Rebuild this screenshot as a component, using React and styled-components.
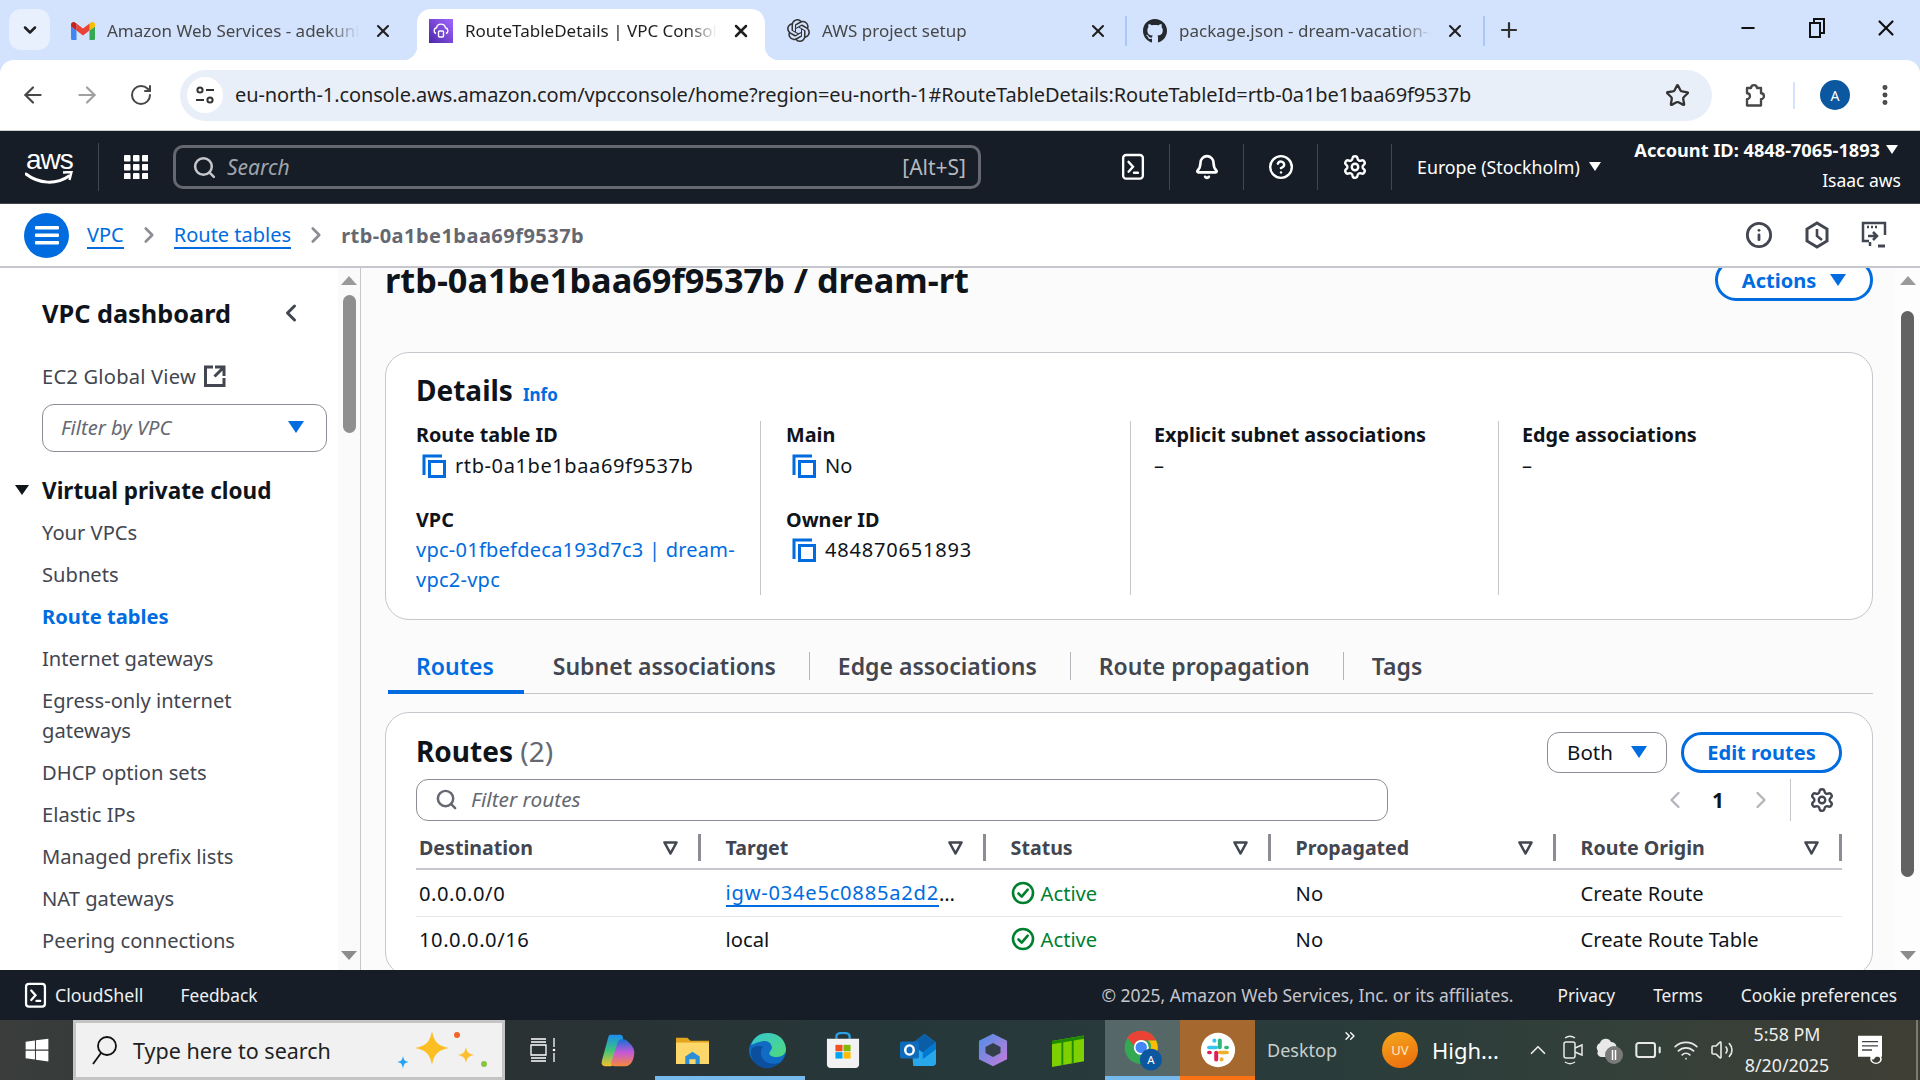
import React from "react";
import styled, { createGlobalStyle } from "styled-components";
import {
  ArrowLeft, ArrowRight, RotateCw, Star, EllipsisVertical, X, Plus, Minus, ChevronDown,
  Bell, CircleHelp, Settings, Search, ChevronLeft, ChevronRight, ChevronUp, Info,
  Battery, Wifi, Volume2, ChevronsRight,
} from "lucide-react";
import { SiOpenai } from "react-icons/si";
import { FaGithub, FaWindows } from "react-icons/fa";

const GlobalStyle = createGlobalStyle`
  html, body { margin: 0; padding: 0; background: #fff; }
  body { font-family: "Noto Sans", "Open Sans", sans-serif; color: #0f141a; }
  * { box-sizing: border-box; }
`;

const Page = styled.div`
  width: 1920px;
  height: 1080px;
  display: flex;
  flex-direction: column;
  overflow: hidden;
`;

/* ---- browser chrome ---- */
const TabStrip = styled.div`
  height: 60px;
  background: #d3e3fd;
  display: flex;
  align-items: flex-end;
  padding-left: 9px;
  flex: none;
`;
const TabList = styled.button`
  width: 41px;
  height: 41px;
  align-self: flex-start;
  margin: 9px 9px 0 0;
  border: 0;
  border-radius: 12px;
  background: #e8f0fe;
  display: flex;
  align-items: center;
  justify-content: center;
  padding: 0;
  color: #1f1f1f;
`;
const Tab = styled.div`
  position: relative;
  width: 348px;
  height: 51px;
  margin-right: ${p => p.$gap || 9}px;
  padding: 0 0 8px 12px;
  display: flex;
  align-items: center;
  border-radius: 14px 14px 0 0;
  background: ${p => (p.$active ? "#fff" : "transparent")};
  ${p => p.$active && `
    &::before, &::after {
      content: "";
      position: absolute;
      bottom: 0;
      width: 14px;
      height: 14px;
    }
    &::before { left: -14px; background: radial-gradient(circle at 0 0, #d3e3fd 14px, #fff 14.5px); }
    &::after { right: -14px; background: radial-gradient(circle at 100% 0, #d3e3fd 14px, #fff 14.5px); }
  `}
`;
const Favicon = styled.span`
  width: 24px;
  height: 24px;
  margin-right: 12px;
  display: flex;
  align-items: center;
  justify-content: center;
  flex: none;
`;
const TabTitle = styled.span`
  width: 252px;
  white-space: nowrap;
  overflow: hidden;
  font-size: 17px;
  color: ${p => (p.$active ? "#1f1f1f" : "#474747")};
  -webkit-mask-image: linear-gradient(to right, #000 88%, transparent 100%);
  mask-image: linear-gradient(to right, #000 88%, transparent 100%);
`;
const TabClose = styled.span`
  margin-left: 12px;
  width: 24px;
  display: flex;
  justify-content: center;
  color: #1f1f1f;
`;
const TabSep = styled.span`
  width: 2px;
  height: 30px;
  background: #a8c7fa;
  align-self: flex-start;
  margin: 16px ${p => p.$right}px 0 ${p => p.$left}px;
`;
const NewTab = styled.span`
  align-self: flex-start;
  margin: 18px 0 0 12px;
  color: #303030;
  display: flex;
`;
const WindowButtons = styled.div`
  margin-left: auto;
  align-self: flex-start;
  display: flex;
  margin-top: 12px;
  color: #111;
`;
const WindowButton = styled.span`
  width: 69px;
  height: 32px;
  display: flex;
  align-items: center;
  justify-content: center;
`;
const Toolbar = styled.div`
  height: 70px;
  background: #fff;
  display: flex;
  align-items: center;
  border-radius: 14px 14px 0 0;
  padding-left: 6px;
  flex: none;
  color: #474747;
  position: relative;
`;
const TabStripBack = styled.div`
  background: #d3e3fd;
  flex: none;
`;
const ToolButton = styled.span`
  width: ${p => p.$width || 54}px;
  margin-left: ${p => p.$left || 0}px;
  display: flex;
  justify-content: center;
  flex: none;
  color: ${p => (p.$dim ? "#a0a0a0" : "#474747")};
`;
const AddressBar = styled.div`
  margin-left: 12px;
  width: 1532px;
  height: 51px;
  border-radius: 26px;
  background: #e9eff9;
  display: flex;
  align-items: center;
  padding-left: 7px;
  flex: none;
`;
const SiteChip = styled.span`
  width: 36px;
  height: 36px;
  border-radius: 50%;
  background: #fff;
  display: flex;
  align-items: center;
  justify-content: center;
  flex: none;
`;
const UrlText = styled.span`
  margin-left: 12px;
  padding-bottom: 2px;
  font-size: 20px;
  letter-spacing: -0.11px;
  color: #1f1f1f;
  white-space: nowrap;
  flex: 1;
  overflow: hidden;
`;
const StarWrap = styled.span`
  width: 60px;
  margin-right: 5px;
  display: flex;
  justify-content: center;
  color: #333;
`;
const ToolDivider = styled.span`
  width: 2px;
  height: 27px;
  background: #d3e3fd;
  margin: 0 25px 0 12px;
  flex: none;
`;
const Avatar = styled.span`
  width: 30px;
  height: 30px;
  border-radius: 50%;
  background: #0b57a0;
  color: #fff;
  font-size: 14px;
  display: flex;
  align-items: center;
  justify-content: center;
  flex: none;
`;
const ChromeEdge = styled.div`
  height: 1px;
  background: #cfcfcf;
  flex: none;
`;

/* ---- aws top nav ---- */
const Nav = styled.div`
  height: 73px;
  background: #161d26;
  display: flex;
  align-items: center;
  color: #fff;
  flex: none;
  border-bottom: 1px solid #414750;
`;
const LogoCell = styled.div`
  width: 99px;
  height: 48px;
  border-right: 1px solid #414750;
  padding-left: 25px;
  display: flex;
  flex-direction: column;
  justify-content: center;
`;
const LogoWord = styled.span`
  font-family: "Liberation Sans", sans-serif;
  font-size: 28px;
  line-height: 22px;
  font-weight: 400;
  letter-spacing: -1px;
  margin-left: 1px;
`;
const GridCell = styled.div`
  width: 74px;
  display: flex;
  justify-content: center;
`;
const SearchBox = styled.div`
  width: 808px;
  height: 44px;
  border: 3px solid #656871;
  border-radius: 10px;
  display: flex;
  align-items: center;
  padding: 0 12px 0 16px;
  color: #c6c6cd;
  font-size: 21px;
`;
const SearchHint = styled.span`
  font-style: italic;
  margin-left: 10px;
  color: #a0a5ad;
`;
const SearchKey = styled.span`
  margin-left: auto;
  color: #b4b8bf;
`;
const NavIcons = styled.div`
  margin-left: 115px;
  display: flex;
`;
const NavIcon = styled.div`
  width: 74px;
  height: 46px;
  border-right: 1px solid #414750;
  display: flex;
  align-items: center;
  justify-content: center;
`;
const RegionText = styled.div`
  margin-left: 25px;
  padding-bottom: 1px;
  font-size: 17.8px;
  display: flex;
  align-items: center;
  gap: 9px;
  white-space: nowrap;
  color: #fff;
`;
const Caret = styled.span`
  width: 0;
  height: 0;
  display: inline-block;
  flex: none;
  border-left: ${p => p.$size || 6}px solid transparent;
  border-right: ${p => p.$size || 6}px solid transparent;
  border-top: ${p => (p.$size || 6) * 1.5}px solid ${p => p.$color || "currentColor"};
`;
const AccountBlock = styled.div`
  margin-left: auto;
  padding: 0 19px 5px 0;
  text-align: right;
  font-size: 17.5px;
  line-height: 24px;
`;
const AccountLine = styled.div`
  font-size: 18.2px;
  font-weight: 700;
  display: flex;
  align-items: center;
  justify-content: flex-end;
  gap: 6px;
  margin: 0 3px 6px 0;
`;

/* ---- breadcrumb ---- */
const CrumbBar = styled.div`
  height: 64px;
  background: #fff;
  border-bottom: 2px solid #c6c6cd;
  display: flex;
  align-items: center;
  padding-left: 24px;
  font-size: 20px;
  flex: none;
`;
const MenuButton = styled.span`
  width: 45px;
  height: 45px;
  border-radius: 50%;
  background: #006ce0;
  display: flex;
  align-items: center;
  justify-content: center;
  margin-right: 18px;
  color: #fff;
`;
const Crumb = styled.a`
  color: #006ce0;
  border-bottom: 2px solid #006ce0;
  line-height: 25px;
`;
const CrumbChevron = styled.span`
  width: 50px;
  display: flex;
  justify-content: center;
  color: #8c8c94;
`;
const CrumbCurrent = styled.span`
  color: #656871;
  font-weight: 700;
  letter-spacing: 0.47px;
`;
const CrumbTools = styled.div`
  margin-left: auto;
  display: flex;
  align-items: center;
  gap: 32px;
  padding-right: 33px;
  color: #424650;
`;

/* ---- body ---- */
const Body = styled.div`
  flex: 1;
  display: flex;
  min-height: 0;
`;
const Sidebar = styled.div`
  width: 361px;
  background: #fff;
  border-right: 1px solid #c6c6cd;
  display: flex;
  flex: none;
`;
const SideContent = styled.div`
  flex: 1;
  padding-left: 42px;
  overflow: hidden;
  font-size: 20.15px;
  color: #424650;
`;
const SideTitleRow = styled.div`
  margin-top: 25px;
  height: 40px;
  display: flex;
  align-items: center;
  font-size: 25.3px;
  font-weight: 700;
  color: #0f141a;
`;
const SideBack = styled.span`
  margin-left: 46px;
  display: flex;
  color: #424650;
`;
const SideLink = styled.div`
  margin-top: 28px;
  line-height: 30px;
  display: flex;
  align-items: center;
  gap: 8px;
  letter-spacing: 0.2px;
`;
const SideSelect = styled.div`
  margin-top: 13px;
  width: 285px;
  height: 48px;
  border: 1px solid #8c8c94;
  border-radius: 12px;
  display: flex;
  align-items: center;
  justify-content: space-between;
  padding: 0 22px 2px 18px;
  font-style: italic;
  color: #656871;
`;
const SideSection = styled.div`
  margin: 18px 0 7px -27px;
  display: flex;
  align-items: center;
  gap: 13px;
  height: 40px;
  font-size: 22.5px;
  font-weight: 700;
  color: #0f141a;
`;
const SideItem = styled.div`
  line-height: 30px;
  margin-bottom: 12px;
  width: 250px;
  ${p => p.$active && "color: #006ce0; font-weight: 700;"}
`;
const Rail = styled.div`
  width: ${p => p.$width}px;
  flex: none;
  background: ${p => p.$bg};
  display: flex;
  flex-direction: column;
  align-items: center;
  padding: 8px 0 10px;
`;
const RailArrowUp = styled.span`
  width: 0;
  height: 0;
  border-left: 8px solid transparent;
  border-right: 8px solid transparent;
  border-bottom: 9px solid #9a9a9a;
`;
const RailArrowDown = styled.span`
  width: 0;
  height: 0;
  border-left: 8px solid transparent;
  border-right: 8px solid transparent;
  border-top: 9px solid #8c8c8c;
  margin-top: auto;
`;
const RailThumb = styled.span`
  width: 13px;
  height: ${p => p.$height}px;
  margin-top: ${p => p.$top}px;
  border-radius: 7px;
  background: ${p => p.$color};
`;

const Main = styled.div`
  flex: 1;
  background: #fbfbfb;
  display: flex;
  min-width: 0;
`;
const MainContent = styled.div`
  flex: 1;
  min-width: 0;
  overflow: hidden;
  padding: 0 22px 0 24px;
`;
const TitleRow = styled.div`
  margin-top: -9px;
  height: 42px;
  display: flex;
  align-items: center;
  justify-content: space-between;
`;
const PageTitle = styled.h1`
  margin: 0;
  font-size: 34.3px;
  line-height: 42px;
  font-weight: 700;
  color: #0f141a;
`;
const OutlineButton = styled.button`
  font-family: inherit;
  height: ${p => p.$height || 42}px;
  width: ${p => p.$width}px;
  border: 3px solid #006ce0;
  border-radius: 21px;
  background: #fff;
  color: #006ce0;
  font-size: 20px;
  font-weight: 700;
  display: flex;
  align-items: center;
  justify-content: center;
  gap: 14px;
  padding: 0;
`;
const Card = styled.section`
  background: #fff;
  border: 1px solid #c6c6cd;
  border-radius: 24px;
  padding: ${p => p.$pad};
  height: ${p => p.$height}px;
  margin-top: ${p => p.$top || 0}px;
`;
const CardHeading = styled.div`
  display: flex;
  align-items: baseline;
  height: 40px;
  line-height: 40px;
  gap: 10px;
`;
const CardTitle = styled.h2`
  margin: 0;
  font-size: 28px;
  font-weight: 700;
  color: #0f141a;
`;
const InfoLink = styled.a`
  font-size: 17px;
  font-weight: 700;
  color: #006ce0;
`;
const DetailGrid = styled.div`
  margin-top: 11px;
  display: grid;
  grid-template-columns: 345px 370px 368px 1fr;
  height: 174px;
`;
const DetailCol = styled.div`
  padding-left: ${p => p.$pad}px;
  padding-right: 20px;
  border-right: ${p => (p.$last ? "0" : "1px solid #c6c6cd")};
  font-size: 20px;
`;
const DetailLabel = styled.div`
  font-weight: 700;
  font-size: 19.8px;
  line-height: 28px;
  margin-top: ${p => p.$top || 0}px;
  white-space: nowrap;
`;
const DetailValue = styled.div`
  line-height: 30px;
  margin-top: ${p => (p.$tight ? 1 : 2)}px;
  display: flex;
  align-items: center;
  gap: 9px;
  padding-left: ${p => (p.$copy ? 6 : 0)}px;
`;
const Spaced = styled.span`
  letter-spacing: ${p => p.$sp}px;
`;
const DetailLink = styled.a`
  display: block;
  line-height: 30px;
  margin-top: 1px;
  color: #006ce0;
  letter-spacing: 0.25px;
`;
const TabsBar = styled.div`
  margin: 30px 0 18px 3px;
  height: 44px;
  display: flex;
  border-bottom: 1px solid #c6c6cd;
`;
const PageTab = styled.div`
  height: 44px;
  padding: 0 ${p => (p.$active ? 30 : 33)}px ${p => (p.$active ? 8 : 12)}px ${p => (p.$active ? 28 : 29)}px;
  display: flex;
  align-items: center;
  position: relative;
  font-size: 23px;
  font-weight: 600;
  color: ${p => (p.$active ? "#006ce0" : "#424650")};
  border-bottom: ${p => (p.$active ? "4px solid #006ce0" : "0")};
  & + &::before {
    content: "";
    position: absolute;
    left: 0;
    top: 2px;
    width: 1px;
    height: 28px;
    background: #b4b4bb;
  }
`;
const RoutesHead = styled.div`
  display: flex;
  align-items: center;
  height: 42px;
  gap: 14px;
`;
const RoutesTitle = styled.h2`
  margin: -2px auto 0 0;
  font-size: 28px;
  font-weight: 700;
  color: #0f141a;
`;
const RoutesCount = styled.span`
  font-weight: 400;
  color: #656871;
`;
const SelectButton = styled.div`
  width: 120px;
  height: 41px;
  border: 1px solid #8c8c94;
  border-radius: 12px;
  background: #fff;
  display: flex;
  align-items: center;
  justify-content: center;
  gap: 18px;
  font-size: 20.5px;
  padding-bottom: 1px;
`;
const FilterRow = styled.div`
  margin-top: 6px;
  height: 42px;
  display: flex;
  align-items: center;
`;
const FilterBox = styled.div`
  width: 972px;
  height: 42px;
  border: 1px solid #8c8c94;
  border-radius: 12px;
  display: flex;
  align-items: center;
  padding: 0 0 2px 18px;
  gap: 13px;
  font-size: 20.8px;
  font-style: italic;
  color: #656871;
`;
const Pager = styled.div`
  margin-left: auto;
  display: flex;
  align-items: center;
  height: 42px;
  font-size: 21px;
  color: #0f141a;
`;
const PagerArrow = styled.span`
  display: flex;
  color: #b4b4bb;
`;
const PagerNum = styled.span`
  width: 58px;
  text-align: center;
  font-weight: 700;
`;
const PagerGear = styled.span`
  margin-left: 15px;
  width: 52px;
  height: 42px;
  border-left: 1px solid #c6c6cd;
  display: flex;
  align-items: center;
  justify-content: center;
  color: #424650;
  padding-left: 10px;
`;
const TableGrid = styled.div`
  display: grid;
  grid-template-columns: 285px 285px 285px 285px 286px;
  margin-top: 6px;
  font-size: 20.15px;
`;
const HeadCell = styled.div`
  height: 43px;
  border-bottom: 2px solid #c6c6cd;
  padding-left: ${p => (p.$first ? 3 : 24.6)}px;
  display: flex;
  align-items: center;
  font-size: 19.6px;
  font-weight: 700;
  color: #424650;
`;
const SortIcon = styled.svg`
  margin-left: auto;
  margin-right: 20px;
  flex: none;
`;
const HeadSep = styled.span`
  width: 3px;
  height: 27px;
  background: #8c8c94;
  flex: none;
`;
const Cell = styled.div`
  height: ${p => p.$height}px;
  border-bottom: ${p => (p.$last ? "0" : "1px solid #e8e8ec")};
  padding-left: ${p => (p.$first ? 3 : 24.6)}px;
  display: flex;
  align-items: center;
  color: #0f141a;
  white-space: nowrap;
`;
const TargetLink = styled.a`
  color: #006ce0;
  border-bottom: 2px solid #006ce0;
  line-height: 25px;
  letter-spacing: 0.75px;
`;
const ActiveStatus = styled.span`
  display: flex;
  align-items: center;
  gap: 6px;
  color: #00802f;
`;

/* ---- console footer ---- */
const ConsoleFooter = styled.div`
  height: 50px;
  background: #161d26;
  color: #d8dce0;
  font-size: 17.3px;
  display: flex;
  align-items: center;
  padding: 0 23px 0 24px;
  flex: none;
`;
const FooterShell = styled.span`
  display: flex;
  align-items: center;
  gap: 8px;
  font-size: 17.8px;
  color: #eef0f2;
  margin-right: 37px;
`;
const FooterCopy = styled.span`
  margin-left: auto;
  font-size: 17.5px;
  color: #c6c6cd;
  margin-right: 44px;
`;
const FooterLink = styled.span`
  margin-left: ${p => p.$gap || 0}px;
  color: #eef0f2;
`;

/* ---- windows taskbar ---- */
const Taskbar = styled.div`
  height: 60px;
  background: linear-gradient(90deg, #3a3d3c 0%, #2a3133 25%, #26383a 50%, #2a3c3a 70%, #34403a 85%, #3f3e34 100%);
  display: flex;
  align-items: center;
  color: #fff;
  flex: none;
`;
const StartCell = styled.div`
  width: 73px;
  display: flex;
  justify-content: center;
`;
const TaskSearch = styled.div`
  width: 432px;
  height: 60px;
  background: #f1f1f1;
  border: 3px solid #c4c4c4;
  display: flex;
  align-items: center;
  padding-left: 15px;
  color: #222;
  font-size: 21.5px;
  flex: none;
`;
const TaskSearchText = styled.span`
  margin-left: 14px;
`;
const TaskSparkle = styled.span`
  margin-left: auto;
  margin-right: 11px;
  display: flex;
`;
const TaskSlot = styled.div`
  width: 75px;
  height: 60px;
  display: flex;
  align-items: center;
  justify-content: center;
  flex: none;
  background: ${p => p.$bg || "transparent"};
  border-bottom: 4px solid ${p => p.$line || "transparent"};
  padding-top: 4px;
`;
const DesktopLabel = styled.span`
  margin-left: 12px;
  font-size: 18px;
  color: #c9cfcf;
  width: 75px;
`;
const MoreChevrons = styled.span`
  align-self: flex-start;
  margin-top: 8px;
  display: flex;
  color: #fff;
`;
const WeatherBadge = styled.span`
  margin-left: 24px;
  width: 36px;
  height: 36px;
  flex: none;
  border-radius: 50%;
  background: linear-gradient(160deg, #f4a81d, #ec6a0c);
  color: #ffe9c2;
  font-size: 13px;
  display: flex;
  align-items: center;
  justify-content: center;
`;
const WeatherText = styled.span`
  margin-left: 14px;
  font-size: 22px;
  width: 93px;
  white-space: nowrap;
`;
const Tray = styled.div`
  display: flex;
  align-items: center;
  gap: 11px;
  color: #e8e8e8;
`;
const ClockBlock = styled.div`
  width: 112px;
  margin-left: -3px;
  text-align: center;
  font-size: 17.8px;
  line-height: 31px;
  color: #eee;
  white-space: nowrap;
`;
const NotifyCell = styled.div`
  width: 50px;
  display: flex;
  justify-content: center;
  margin-left: 2px;
`;
const ShowDesktop = styled.span`
  width: 2px;
  height: 60px;
  margin-left: auto;
  margin-right: 2px;
  background: #7a7a70;
`;

/* ---- small drawings ---- */
const CopyIcon = () => (
  <svg width="24" height="24" viewBox="0 0 24 24" fill="none" stroke="#006ce0" strokeWidth="3">
    <path d="M2 21V2h18" />
    <rect x="7.5" y="7.5" width="15" height="15" />
  </svg>
);
const CheckCircle = () => (
  <svg width="24" height="24" viewBox="0 0 24 24" fill="none" stroke="#00802f" strokeWidth="2.6">
    <circle cx="12" cy="12" r="10" />
    <path d="M7.5 12.5l3.2 3.2 6-7" strokeLinecap="round" strokeLinejoin="round" />
  </svg>
);
const SortTriangle = () => (
  <SortIcon width="15" height="14" viewBox="0 0 15 14">
    <path d="M1.5 1.5h12L7.5 12.5z" fill="none" stroke="#424650" strokeWidth="2.6" strokeLinejoin="round" />
  </SortIcon>
);
const ShellIcon = ({ size = 24 }) => (
  <svg width={size} height={size * 1.15} viewBox="0 0 24 28" fill="none" stroke="#fff" strokeWidth="2.4">
    <rect x="2" y="2" width="20" height="24" rx="3" />
    <path d="M7.5 9l4.5 5-4.5 5M13 20h4" strokeLinecap="round" />
  </svg>
);
const ExternalBox = () => (
  <svg width="22" height="22" viewBox="0 0 22 22" fill="none" stroke="#424650" strokeWidth="3">
    <path d="M9 2H1.500v18.500H20V13" />
    <path d="M11 2h9v9M20 2l-9.500 9.500" />
  </svg>
);
const Extension = () => (
  <svg width="28" height="28" viewBox="0 0 24 24" fill="none" stroke="#474747" strokeWidth="2" strokeLinejoin="round">
    <path d="M6 6h3.500a2.500 2.500 0 0 1 5 0H18v4.500a2.500 2.500 0 0 1 0 5V21H6v-5.500a2.500 2.500 0 0 0 0-5z" />
  </svg>
);
const Gmail = () => (
  <svg width="24" height="20" viewBox="0 0 24 18">
    <path d="M1.6 18H5.5V8.6L0 4.5v11.9C0 17.3.7 18 1.6 18z" fill="#4285f4" />
    <path d="M18.5 18h3.9c.9 0 1.6-.7 1.6-1.6V4.5l-5.5 4.1z" fill="#34a853" />
    <path d="M18.5 1.5v7.1L24 4.5V2.4c0-2-2.3-3.1-3.9-1.9z" fill="#fbbc04" />
    <path d="M5.5 8.6V1.5L12 6.4l6.5-4.9v7.1L12 13.5z" fill="#ea4335" />
    <path d="M0 2.4v2.1l5.5 4.1V1.5L3.9.5C2.3-.7 0 .4 0 2.4z" fill="#c5221f" />
  </svg>
);
const VpcFavicon = () => (
  <svg width="24" height="24" viewBox="0 0 24 24">
    <defs>
      <linearGradient id="vpcFav" x1="0" y1="1" x2="1" y2="0">
        <stop offset="0" stopColor="#4d27a8" />
        <stop offset="1" stopColor="#a166ff" />
      </linearGradient>
    </defs>
    <rect width="24" height="24" fill="url(#vpcFav)" />
    <path d="M7 14.5a3 3 0 0 1 .5-5.7 4.6 4.6 0 0 1 9 0 3 3 0 0 1 .5 5.7" fill="none" stroke="#fff" strokeWidth="1.4" />
    <rect x="9.5" y="12" width="5" height="6" rx="1" fill="none" stroke="#fff" strokeWidth="1.4" />
  </svg>
);
const AppsGrid = () => (
  <svg width="24" height="24" viewBox="0 0 24 24" fill="#fff">
    {[0, 9, 18].flatMap(x => [0, 9, 18].map(y => (
      <rect key={`${x}-${y}`} x={x} y={y} width="6.5" height="6.5" rx="1" />
    )))}
  </svg>
);
const AwsSmile = () => (
  <svg width="48" height="15" viewBox="0 0 48 15">
    <path d="M1 3c13 10 30 11 43 2" fill="none" stroke="#fff" strokeWidth="3" strokeLinecap="round" />
    <path d="M38 1.5l8.500-.5-2 8" fill="none" stroke="#fff" strokeWidth="2.4" />
  </svg>
);
const Tune = () => (
  <svg width="22" height="22" viewBox="0 0 22 22" fill="none" stroke="#333" strokeWidth="2">
    <circle cx="6" cy="6" r="2.600" />
    <path d="M12 6h8M2 16h8" />
    <circle cx="16" cy="16" r="2.600" />
  </svg>
);
const Sparkles = () => (
  <svg width="96" height="60" viewBox="0 0 96 60">
    <path d="M37 11c2 11 6 15 17.500 17C43 30 39 34 37 45c-2-11-6-15-17.500-17C31 26 35 22 37 11z" fill="#fbbf24" />
    <path d="M71 27c1 5 2.500 7 8 8-5.500 1-7 3-8 8-1-5-2.500-7-8-8 5.500-1 7-3 8-8z" fill="#fcc02e" />
    <path d="M8 36c.8 4 1.500 5 5.500 6-4 1-4.700 2-5.500 7-.8-5-1.500-6-5.500-7 4-1 4.700-2 5.500-6z" fill="#22a3f5" />
    <circle cx="62" cy="15" r="3" fill="#f0662a" />
    <circle cx="89" cy="44" r="3" fill="#8ac33f" />
  </svg>
);
const TaskView = () => (
  <svg width="26" height="24" viewBox="0 0 26 24" fill="none" stroke="#fff" strokeWidth="1.300">
    <path d="M1 1h15M1 4h15M1 7h15v10H1zM1 20h15M1 23h15M24 0v9M24 15v9" />
    <circle cx="24" cy="12" r="1.300" fill="#fff" stroke="none" />
  </svg>
);
const Copilot = () => (
  <svg width="34" height="33" viewBox="0 0 36 40" preserveAspectRatio="none">
    <defs>
      <linearGradient id="cpA" x1="0" y1="0" x2="0" y2="1">
        <stop offset="0" stopColor="#1b8df0" />
        <stop offset="0.5" stopColor="#3fc47a" />
        <stop offset="1" stopColor="#f6c12d" />
      </linearGradient>
      <linearGradient id="cpB" x1="0" y1="0" x2="0" y2="1">
        <stop offset="0" stopColor="#0f6fd8" />
        <stop offset="0.5" stopColor="#c659d6" />
        <stop offset="1" stopColor="#f5883a" />
      </linearGradient>
    </defs>
    <path d="M10 1h10c3 0 4 3 3 7l-7 24c-1 4-3 7-7 7H5C1 39 0 36 1 32L7 7c1-4 1-6 3-6z" fill="url(#cpA)" />
    <path d="M26 39H14c-3 0-4-2-3-5l6-22c1-3 2-5 5-6 5 0 6 3 9 6 3 3 5 8 4 14-1 7-4 13-9 13z" fill="url(#cpB)" />
  </svg>
);
const Files = () => (
  <svg width="33" height="28" viewBox="0 0 32 30" preserveAspectRatio="none">
    <path d="M0 2h11l3 3h18v25H0z" fill="#e3a51d" />
    <rect y="7" width="32" height="23" fill="#fcd76a" />
    <path d="M9 30v-8l7-5 7 5v8h-4v-5h-6v5z" fill="#2a8fd6" />
  </svg>
);
const Edge = () => (
  <svg width="37" height="37" viewBox="0 0 36 40" preserveAspectRatio="none">
    <defs>
      <linearGradient id="edgeA" x1="0" y1="0" x2="1" y2="1">
        <stop offset="0" stopColor="#36c8d0" />
        <stop offset="1" stopColor="#4fd87c" />
      </linearGradient>
    </defs>
    <circle cx="18" cy="20" r="18" fill="#0f6bc4" />
    <path d="M2 14C5 5 11 1 18 1c11 0 18 8 18 18 0 5-4 8-9 8-5 0-8-2-7-5 1-3 3-3 2-7-1-4-5-6-9-5-6 1-10 4-11 4z" fill="url(#edgeA)" />
    <path d="M14 16c-4 4-3 12 2 16 4 3 10 3 14 1-4 5-10 7-15 6C7 37 1 30 2 20c1-4 6-6 12-4z" fill="#0c4f9e" />
  </svg>
);
const Store = () => (
  <svg width="34" height="36" viewBox="0 0 36 42" preserveAspectRatio="none">
    <path d="M11 8V5c0-3 3-4 7-4s7 1 7 4v3" fill="none" stroke="#2aa0e6" strokeWidth="2.500" />
    <path d="M1 8h34v30c0 2-1 4-4 4H5c-3 0-4-2-4-4z" fill="#f2f2f2" />
    <rect x="10" y="15" width="7.500" height="7.500" fill="#f25022" />
    <rect x="18.500" y="15" width="7.500" height="7.500" fill="#7fba00" />
    <rect x="10" y="23.500" width="7.500" height="7.500" fill="#00a4ef" />
    <rect x="18.500" y="23.500" width="7.500" height="7.500" fill="#ffb900" />
  </svg>
);
const Outlook = () => (
  <svg width="36" height="32" viewBox="0 0 38 38" preserveAspectRatio="none">
    <path d="M12 12L26 0l12 10v24c0 2-1 4-4 4H14z" fill="#28a8ea" />
    <path d="M26 0l12 10-14 12-12-10z" fill="#0a5ea8" />
    <path d="M24 22l14-12v8L24 30z" fill="#0078d4" />
    <rect y="9" width="20" height="20" rx="2" fill="#0f6cbd" />
    <ellipse cx="10" cy="19" rx="4.500" ry="5.500" fill="none" stroke="#fff" strokeWidth="2.600" />
  </svg>
);
const Hexa = () => (
  <svg width="30" height="34" viewBox="0 0 32 44" preserveAspectRatio="none">
    <defs>
      <linearGradient id="hex" x1="0" y1="0" x2="1" y2="1">
        <stop offset="0" stopColor="#4d8fe8" />
        <stop offset="1" stopColor="#c77bd8" />
      </linearGradient>
    </defs>
    <path d="M16 1l15 9v24l-15 9-15-9V10z" fill="url(#hex)" />
    <path d="M16 13l8 5v8l-8 5-8-5v-8z" fill="#33404a" />
  </svg>
);
const Planner = () => (
  <svg width="32" height="34" viewBox="0 0 34 42" preserveAspectRatio="none">
    <path d="M0 10l34-7v32L0 42z" fill="#7fd000" />
    <path d="M11 8.500v31M22 6v31" stroke="#1d8a00" strokeWidth="2" />
    <path d="M0 10l34-7v4L0 14z" fill="#1d8a00" />
  </svg>
);
const ChromeLogo = () => (
  <svg width="40" height="42" viewBox="0 0 44 48">
    <circle cx="20" cy="21" r="19" fill="#34a853" />
    <path d="M20 2a19 19 0 0 1 17 11H20a8 8 0 0 0-8 6L4 10A19 19 0 0 1 20 2z" fill="#ea4335" />
    <path d="M37 13a19 19 0 0 1-14 27l6-15a8 8 0 0 0-1-12z" fill="#fbbc04" />
    <circle cx="20" cy="21" r="8.500" fill="#fff" />
    <circle cx="20" cy="21" r="6.500" fill="#4285f4" />
    <circle cx="31" cy="35" r="12.500" fill="#0b57a0" />
    <text x="31" y="40" textAnchor="middle" fontSize="13" fill="#fff" fontFamily="Noto Sans">A</text>
  </svg>
);
const Slack = () => (
  <svg width="36" height="36" viewBox="0 0 40 44" preserveAspectRatio="none">
    <ellipse cx="20" cy="22" rx="19" ry="21" fill="#fff" />
    <g strokeWidth="4.400" strokeLinecap="round" fill="none">
      <path d="M10 19h8M16 10v1" stroke="#36c5f0" />
      <path d="M22 10v9M29 19h1" stroke="#2eb67d" />
      <path d="M30 25h-8M24 34v-1" stroke="#ecb22e" />
      <path d="M18 34v-9M11 25h-1" stroke="#e01e5a" />
    </g>
  </svg>
);
const CloudTray = () => (
  <svg width="28" height="30" viewBox="0 0 28 30">
    <path d="M3 16a5 5 0 0 1 2-8 6 6 0 0 1 11-1 5 5 0 0 1 5 7l-6 8H6a4 4 0 0 1-3-6z" fill="#e8e8e8" />
    <circle cx="19" cy="20" r="9" fill="#7a7a7a" />
    <path d="M17.500 15v10M20.500 15v10" stroke="#fff" strokeWidth="1.500" />
  </svg>
);
const CameraTray = () => (
  <svg width="22" height="30" viewBox="0 0 22 30" fill="none" stroke="#e8e8e8" strokeWidth="1.500">
    <rect x="2" y="7" width="11" height="16" rx="2" />
    <path d="M13 13l7-3v10l-7-3M3 3c3-2 7-2 10 0M3 27c3 2 7 2 10 0" />
  </svg>
);
const Notify = () => (
  <svg width="26" height="30" viewBox="0 0 26 36" preserveAspectRatio="none">
    <path d="M1 1h24v25h-6l-3 4-3-4H1z" fill="#fff" />
    <path d="M5 8h16M5 13h16M5 18h10" stroke="#444" strokeWidth="1.600" />
    <circle cx="19" cy="29" r="5" fill="none" stroke="#fff" strokeWidth="1.600" />
  </svg>
);
const ResourceIcon = () => (
  <svg width="24" height="28" viewBox="0 0 24 28" fill="none" stroke="#424650" strokeWidth="3">
    <path d="M12 2l10 6v12l-10 6-10-6V8z" />
    <path d="M12 8v7l5 4" strokeWidth="2.600" />
  </svg>
);
const ScreenIcon = () => (
  <svg width="26" height="28" viewBox="0 0 26 28" fill="none" stroke="#424650" strokeWidth="2.500">
    <path d="M8 20H2V2h22v12" />
    <path d="M6 6h2M10 6h2M14 6h2" />
    <path d="M7 15h9M12 11l4 4-4 4M9 21v4" />
    <path d="M17 25h7" strokeWidth="3" />
  </svg>
);
const RestoreIcon = () => (
  <svg width="16" height="20" viewBox="0 0 16 20" fill="none" stroke="#111" strokeWidth="2">
    <rect x="1" y="5" width="10" height="14" />
    <path d="M5 5V1h10v14h-4" />
  </svg>
);

const sideItems = [
  "Your VPCs", "Subnets", "Route tables", "Internet gateways", "Egress-only internet gateways",
  "DHCP option sets", "Elastic IPs", "Managed prefix lists", "NAT gateways", "Peering connections",
];
const pageTabs = ["Routes", "Subnet associations", "Edge associations", "Route propagation", "Tags"];
const columns = ["Destination", "Target", "Status", "Propagated", "Route Origin"];

const StatusCell = ({ last, height }) => (
  <Cell $last={last} $height={height}>
    <ActiveStatus><CheckCircle />Active</ActiveStatus>
  </Cell>
);

export default function App() {
  return (
    <Page>
      <GlobalStyle />
      <TabStrip>
        <TabList><ChevronDown size={20} strokeWidth={3} /></TabList>
        <Tab $gap={10}>
          <Favicon><Gmail /></Favicon>
          <TabTitle>Amazon Web Services - adekunle</TabTitle>
          <TabClose><X size={20} strokeWidth={2.5} /></TabClose>
        </Tab>
        <Tab $active>
          <Favicon><VpcFavicon /></Favicon>
          <TabTitle $active>RouteTableDetails | VPC Console</TabTitle>
          <TabClose><X size={20} strokeWidth={3} /></TabClose>
        </Tab>
        <Tab $gap={1}>
          <Favicon><SiOpenai size={23} color="#333" /></Favicon>
          <TabTitle>AWS project setup</TabTitle>
          <TabClose><X size={20} strokeWidth={2.5} /></TabClose>
        </Tab>
        <TabSep $left={2} $right={4} />
        <Tab $gap={1}>
          <Favicon><FaGithub size={26} color="#24292f" /></Favicon>
          <TabTitle>package.json - dream-vacation-app</TabTitle>
          <TabClose><X size={20} strokeWidth={2.5} /></TabClose>
        </Tab>
        <TabSep $left={3} $right={0} />
        <NewTab><Plus size={24} strokeWidth={2.2} /></NewTab>
        <WindowButtons>
          <WindowButton><Minus size={20} strokeWidth={2.4} /></WindowButton>
          <WindowButton><RestoreIcon /></WindowButton>
          <WindowButton><X size={26} strokeWidth={2} /></WindowButton>
        </WindowButtons>
      </TabStrip>

      <TabStripBack>
        <Toolbar>
          <ToolButton><ArrowLeft size={26} /></ToolButton>
          <ToolButton $dim><ArrowRight size={26} /></ToolButton>
          <ToolButton><RotateCw size={24} /></ToolButton>
          <AddressBar>
            <SiteChip><Tune /></SiteChip>
            <UrlText>eu-north-1.console.aws.amazon.com/vpcconsole/home?region=eu-north-1#RouteTableDetails:RouteTableId=rtb-0a1be1baa69f9537b</UrlText>
            <StarWrap><Star size={25} strokeWidth={2.2} /></StarWrap>
          </AddressBar>
          <ToolButton $left={15}><Extension /></ToolButton>
          <ToolDivider />
          <Avatar>A</Avatar>
          <ToolButton $width={70}><EllipsisVertical size={26} strokeWidth={2.6} /></ToolButton>
        </Toolbar>
      </TabStripBack>
      <ChromeEdge />

      <Nav>
        <LogoCell>
          <LogoWord>aws</LogoWord>
          <AwsSmile />
        </LogoCell>
        <GridCell><AppsGrid /></GridCell>
        <SearchBox>
          <Search size={25} color="#c6c6cd" strokeWidth={2.4} />
          <SearchHint>Search</SearchHint>
          <SearchKey>[Alt+S]</SearchKey>
        </SearchBox>
        <NavIcons>
          <NavIcon><ShellIcon /></NavIcon>
          <NavIcon><Bell size={26} strokeWidth={2.4} /></NavIcon>
          <NavIcon><CircleHelp size={26} strokeWidth={2.2} /></NavIcon>
          <NavIcon><Settings size={26} strokeWidth={2.2} /></NavIcon>
        </NavIcons>
        <RegionText>Europe (Stockholm) <Caret /></RegionText>
        <AccountBlock>
          <AccountLine>Account ID: 4848-7065-1893 <Caret /></AccountLine>
          <div>Isaac aws</div>
        </AccountBlock>
      </Nav>

      <CrumbBar>
        <MenuButton>
          <svg width="24" height="20" viewBox="0 0 24 20" fill="#fff">
            <rect width="24" height="3.500" rx="1" y="1" />
            <rect width="24" height="3.500" rx="1" y="8.500" />
            <rect width="24" height="3.500" rx="1" y="16" />
          </svg>
        </MenuButton>
        <Crumb>VPC</Crumb>
        <CrumbChevron><ChevronRight size={26} strokeWidth={2.4} /></CrumbChevron>
        <Crumb>Route tables</Crumb>
        <CrumbChevron><ChevronRight size={26} strokeWidth={2.4} /></CrumbChevron>
        <CrumbCurrent>rtb-0a1be1baa69f9537b</CrumbCurrent>
        <CrumbTools>
          <Info size={28} strokeWidth={2.4} />
          <ResourceIcon />
          <ScreenIcon />
        </CrumbTools>
      </CrumbBar>

      <Body>
        <Sidebar>
          <SideContent>
            <SideTitleRow>
              VPC dashboard
              <SideBack><ChevronLeft size={28} strokeWidth={2.6} /></SideBack>
            </SideTitleRow>
            <SideLink>EC2 Global View <ExternalBox /></SideLink>
            <SideSelect>Filter by VPC <Caret $size={8} $color="#006ce0" /></SideSelect>
            <SideSection><Caret $size={7} $color="#0f141a" />Virtual private cloud</SideSection>
            {sideItems.map(item => (
              <SideItem key={item} $active={item === "Route tables"}>{item}</SideItem>
            ))}
          </SideContent>
          <Rail $width={22} $bg="#fafafa">
            <RailArrowUp />
            <RailThumb $height={138} $top={10} $color="#8f8f8f" />
            <RailArrowDown />
          </Rail>
        </Sidebar>

        <Main>
          <MainContent>
            <TitleRow>
              <PageTitle>rtb-0a1be1baa69f9537b / dream-rt</PageTitle>
              <OutlineButton $width={158}>Actions <Caret $size={8} /></OutlineButton>
            </TitleRow>

            <Card $pad="17px 30px 0" $height={268} $top={51}>
              <CardHeading>
                <CardTitle>Details</CardTitle>
                <InfoLink>Info</InfoLink>
              </CardHeading>
              <DetailGrid>
                <DetailCol $pad={0}>
                  <DetailLabel>Route table ID</DetailLabel>
                  <DetailValue $copy><CopyIcon /><Spaced $sp={0.6}>rtb-0a1be1baa69f9537b</Spaced></DetailValue>
                  <DetailLabel $top={25}>VPC</DetailLabel>
                  <DetailLink>vpc-01fbefdeca193d7c3 | dream-vpc2-vpc</DetailLink>
                </DetailCol>
                <DetailCol $pad={25}>
                  <DetailLabel>Main</DetailLabel>
                  <DetailValue $copy><CopyIcon />No</DetailValue>
                  <DetailLabel $top={25}>Owner ID</DetailLabel>
                  <DetailValue $copy $tight><CopyIcon /><Spaced $sp={0.8}>484870651893</Spaced></DetailValue>
                </DetailCol>
                <DetailCol $pad={23}>
                  <DetailLabel>Explicit subnet associations</DetailLabel>
                  <DetailValue>–</DetailValue>
                </DetailCol>
                <DetailCol $pad={23} $last>
                  <DetailLabel>Edge associations</DetailLabel>
                  <DetailValue>–</DetailValue>
                </DetailCol>
              </DetailGrid>
            </Card>

            <TabsBar>
              {pageTabs.map((t, i) => <PageTab key={t} $active={i === 0}>{t}</PageTab>)}
            </TabsBar>

            <Card $pad="18px 30px 0" $height={264}>
              <RoutesHead>
                <RoutesTitle>Routes <RoutesCount>(2)</RoutesCount></RoutesTitle>
                <SelectButton>Both <Caret $size={8} $color="#006ce0" /></SelectButton>
                <OutlineButton $width={161} $height={41}>Edit routes</OutlineButton>
              </RoutesHead>
              <FilterRow>
                <FilterBox><Search size={23} color="#656871" strokeWidth={2.6} />Filter routes</FilterBox>
                <Pager>
                  <PagerArrow><ChevronLeft size={28} strokeWidth={2} /></PagerArrow>
                  <PagerNum>1</PagerNum>
                  <PagerArrow><ChevronRight size={28} strokeWidth={2} /></PagerArrow>
                  <PagerGear><Settings size={26} strokeWidth={2.2} /></PagerGear>
                </Pager>
              </FilterRow>
              <TableGrid>
                {columns.map((c, i) => (
                  <HeadCell key={c} $first={i === 0}>{c}<SortTriangle /><HeadSep /></HeadCell>
                ))}
                <Cell $first $height={47}><Spaced $sp={0.55}>0.0.0.0/0</Spaced></Cell>
                <Cell $height={47}><TargetLink>igw-034e5c0885a2d2</TargetLink>…</Cell>
                <StatusCell height={47} />
                <Cell $height={47}>No</Cell>
                <Cell $height={47}>Create Route</Cell>
                <Cell $first $last $height={44}><Spaced $sp={0.55}>10.0.0.0/16</Spaced></Cell>
                <Cell $last $height={44}>local</Cell>
                <StatusCell last height={44} />
                <Cell $last $height={44}>No</Cell>
                <Cell $last $height={44}>Create Route Table</Cell>
              </TableGrid>
            </Card>
          </MainContent>
          <Rail $width={25} $bg="#fdfdfd">
            <RailArrowUp />
            <RailThumb $height={566} $top={26} $color="#636363" />
            <RailArrowDown />
          </Rail>
        </Main>
      </Body>

      <ConsoleFooter>
        <FooterShell><ShellIcon size={23} />CloudShell</FooterShell>
        <FooterLink>Feedback</FooterLink>
        <FooterCopy>© 2025, Amazon Web Services, Inc. or its affiliates.</FooterCopy>
        <FooterLink>Privacy</FooterLink>
        <FooterLink $gap={38}>Terms</FooterLink>
        <FooterLink $gap={38}>Cookie preferences</FooterLink>
      </ConsoleFooter>

      <Taskbar>
        <StartCell><FaWindows size={26} /></StartCell>
        <TaskSearch>
          <svg width="28" height="30" viewBox="0 0 28 30" fill="none" stroke="#111" strokeWidth="1.800">
            <circle cx="16" cy="11" r="9" />
            <path d="M10 18L2 29" />
          </svg>
          <TaskSearchText>Type here to search</TaskSearchText>
          <TaskSparkle><Sparkles /></TaskSparkle>
        </TaskSearch>
        <TaskSlot><TaskView /></TaskSlot>
        <TaskSlot><Copilot /></TaskSlot>
        <TaskSlot $line="#76b9ed"><Files /></TaskSlot>
        <TaskSlot $line="#76b9ed"><Edge /></TaskSlot>
        <TaskSlot><Store /></TaskSlot>
        <TaskSlot><Outlook /></TaskSlot>
        <TaskSlot><Hexa /></TaskSlot>
        <TaskSlot><Planner /></TaskSlot>
        <TaskSlot $bg="#566767" $line="#76b9ed"><ChromeLogo /></TaskSlot>
        <TaskSlot $bg="#a5692f" $line="#f97316"><Slack /></TaskSlot>
        <DesktopLabel>Desktop</DesktopLabel>
        <MoreChevrons><ChevronsRight size={16} /></MoreChevrons>
        <WeatherBadge>UV</WeatherBadge>
        <WeatherText>High...</WeatherText>
        <Tray>
          <ChevronUp size={26} strokeWidth={1.6} />
          <CameraTray />
          <CloudTray />
          <Battery size={28} strokeWidth={1.8} />
          <Wifi size={26} strokeWidth={1.6} />
          <Volume2 size={24} strokeWidth={1.6} />
        </Tray>
        <ClockBlock>5:58 PM<br />8/20/2025</ClockBlock>
        <NotifyCell><Notify /></NotifyCell>
        <ShowDesktop />
      </Taskbar>
    </Page>
  );
}
